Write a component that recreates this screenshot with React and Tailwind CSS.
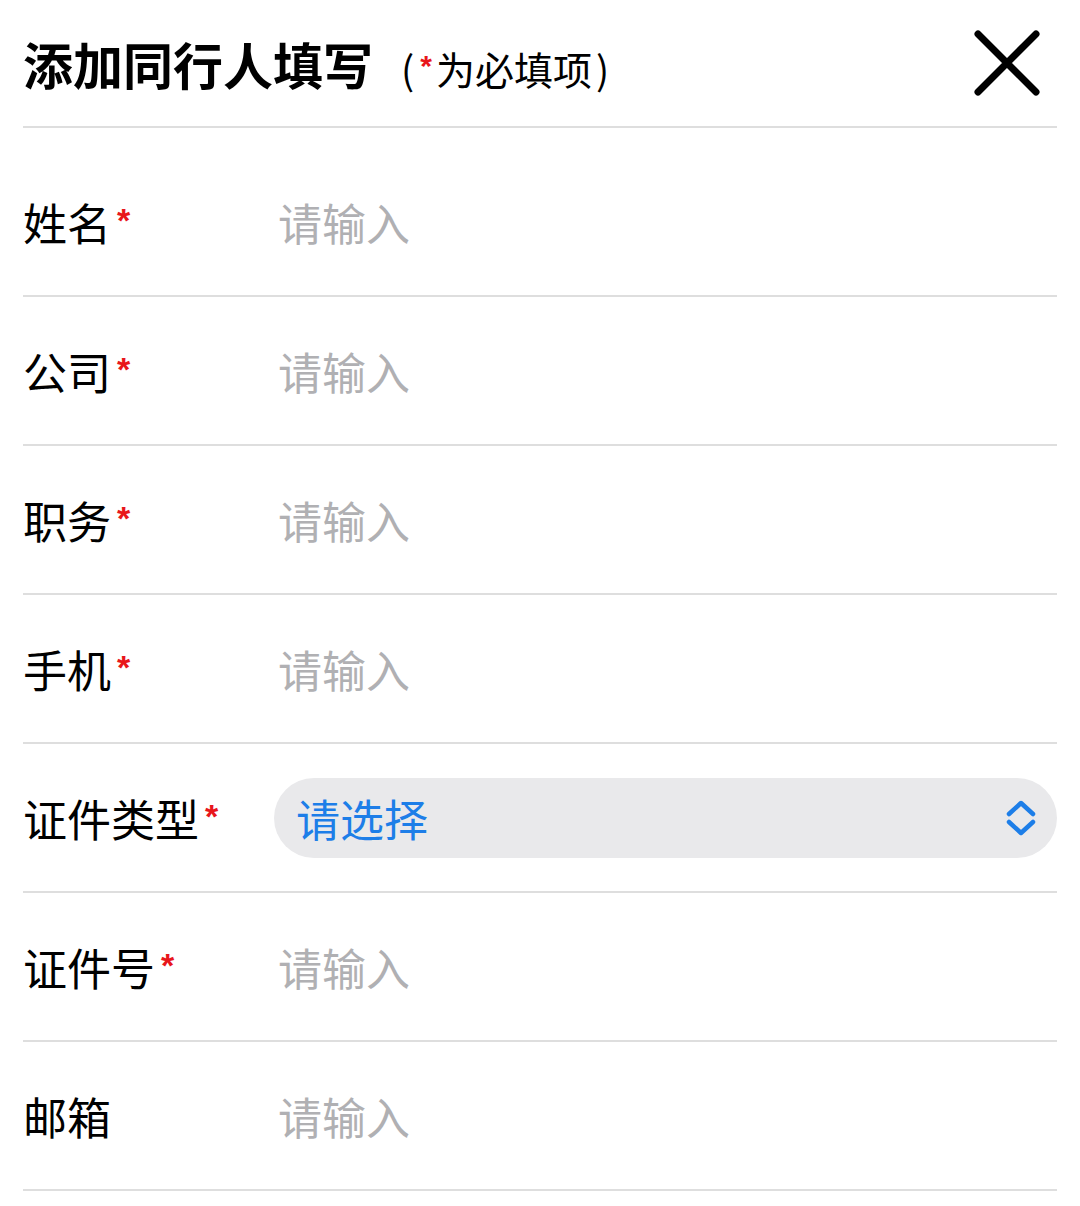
import React from "react";

const FONT = { fontFamily: '"Noto Sans CJK SC", "Noto Sans", sans-serif' };

function Star() {
  return (
    <span
      className="text-[#e8161b] text-[34px] font-bold leading-none ml-[6px] relative top-[-2px]"
      style={{ fontFamily: '"Liberation Sans", sans-serif' }}
    >
      *
    </span>
  );
}

function Row({ label, required, children }) {
  return (
    <div className="flex items-center h-[149px] border-b-2 border-[#dedede]">
      <div className="w-[251px] shrink-0 flex items-center text-[44px] leading-none text-black">
        <span>{label}</span>
        {required && <Star />}
      </div>
      <div className="flex-1 flex items-center">{children}</div>
    </div>
  );
}

function Placeholder() {
  return <span className="pl-[4px] text-[44px] leading-none text-[#b0b0b3]">请输入</span>;
}

export default function App() {
  return (
    <div className="w-[1080px] h-[1206px] bg-white px-[23px]" style={FONT}>
      <div className="flex items-center justify-between h-[128px] border-b-2 border-[#dedede]">
        <div className="flex items-center">
          <span className="text-[50px] font-bold leading-none text-black">添加同行人填写</span>
          <span className="text-[39px] leading-none text-black ml-[28px] flex items-center relative top-[5px]">
            <span>(</span>
            <span
              className="text-[#e8161b] text-[30px] font-bold relative top-[-2px] ml-[6px] mr-[4px]"
              style={{ fontFamily: '"Liberation Sans", sans-serif' }}
            >
              *
            </span>
            <span>为必填项</span>
            <span className="ml-[4px]">)</span>
          </span>
        </div>
        <svg width="70" height="70" viewBox="0 0 70 70" className="mr-[15px]">
          <path d="M6 6 L64 64 M64 6 L6 64" stroke="#000" strokeWidth="7" strokeLinecap="round" fill="none" />
        </svg>
      </div>
      <div className="pt-[20px]">
        <Row label="姓名" required><Placeholder /></Row>
        <Row label="公司" required><Placeholder /></Row>
        <Row label="职务" required><Placeholder /></Row>
        <Row label="手机" required><Placeholder /></Row>
        <Row label="证件类型" required>
          <div className="w-full h-[80px] rounded-full bg-[#e9e9eb] flex items-center justify-between pl-[22px] pr-[20px]">
            <span className="text-[44px] leading-none text-[#1d7ee8]">请选择</span>
            <svg width="32" height="36" viewBox="0 0 32 36">
              <path d="M4 14 L16 3 L28 14 M4 22 L16 33 L28 22" stroke="#1d7ee8" strokeWidth="4.5" strokeLinecap="round" strokeLinejoin="round" fill="none" />
            </svg>
          </div>
        </Row>
        <Row label="证件号" required><Placeholder /></Row>
        <Row label="邮箱"><Placeholder /></Row>
      </div>
    </div>
  );
}
